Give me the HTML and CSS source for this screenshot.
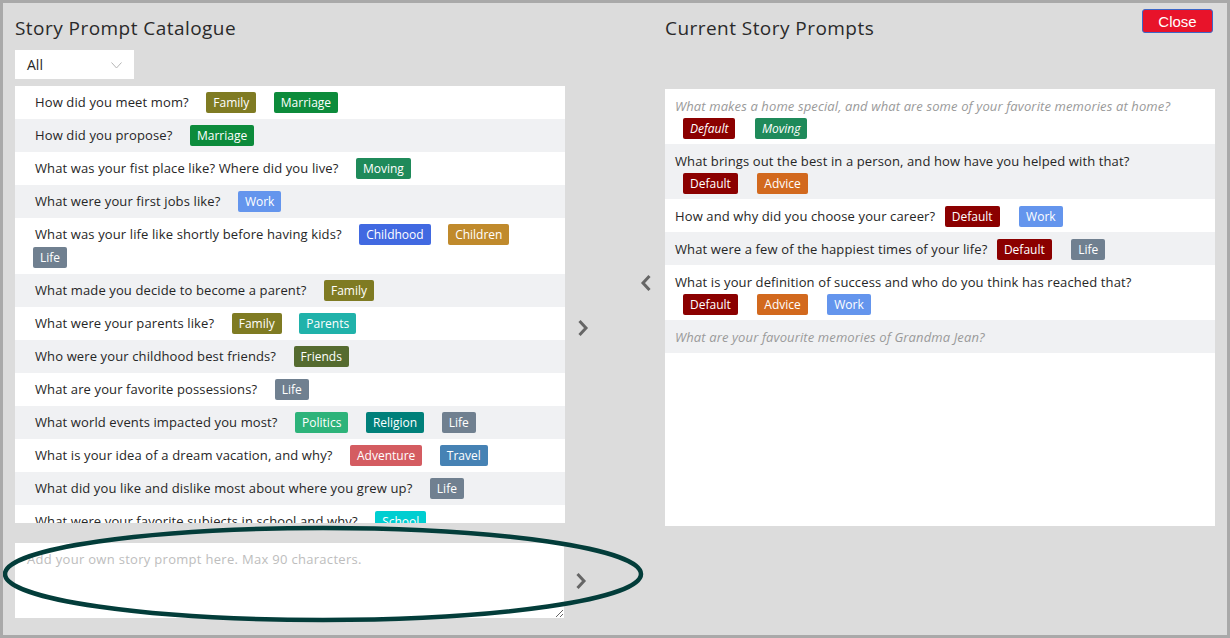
FILE: index.html
```html
<!DOCTYPE html>
<html>
<head>
<meta charset="utf-8">
<link rel="stylesheet" href="styles.css">
</head>
<body>
<div class="frame">
  <div class="top">
    <div class="col">
      <h1 class="title">Story Prompt Catalogue</h1>
      <div class="select"><span>All</span>
        <svg class="caret" width="11" height="7" viewBox="0 0 11 7"><path d="M0.5 0.5 L5.5 6 L10.5 0.5" fill="none" stroke="#b5b5b5" stroke-width="1"/></svg>
      </div>
      <div class="list catalogue">
        <div class="row">How did you meet mom? <span class="tag family">Family</span> <span class="tag marriage">Marriage</span></div>
        <div class="row">How did you propose? <span class="tag marriage">Marriage</span></div>
        <div class="row">What was your fist place like? Where did you live? <span class="tag moving">Moving</span></div>
        <div class="row">What were your first jobs like? <span class="tag work">Work</span></div>
        <div class="row">What was your life like shortly before having kids? <span class="tag childhood">Childhood</span> <span class="tag children">Children</span> <span class="tag life">Life</span></div>
        <div class="row">What made you decide to become a parent? <span class="tag family">Family</span></div>
        <div class="row">What were your parents like? <span class="tag family">Family</span> <span class="tag parents">Parents</span></div>
        <div class="row">Who were your childhood best friends? <span class="tag friends">Friends</span></div>
        <div class="row">What are your favorite possessions? <span class="tag life">Life</span></div>
        <div class="row">What world events impacted you most? <span class="tag politics">Politics</span> <span class="tag religion">Religion</span> <span class="tag life">Life</span></div>
        <div class="row">What is your idea of a dream vacation, and why? <span class="tag adventure">Adventure</span> <span class="tag travel">Travel</span></div>
        <div class="row">What did you like and dislike most about where you grew up? <span class="tag life">Life</span></div>
        <div class="row">What were your favorite subjects in school and why? <span class="tag school">School</span></div>
      </div>
    </div>
    <div class="mid">
      <svg class="arrow left" width="12" height="18" viewBox="0 0 12 18"><path d="M9.5 2 L3 9 L9.5 16" fill="none" stroke="#666" stroke-width="3"/></svg>
      <svg class="arrow right" width="12" height="18" viewBox="0 0 12 18"><path d="M2.5 2 L9 9 L2.5 16" fill="none" stroke="#666" stroke-width="3"/></svg>
    </div>
    <div class="col">
      <div class="head">
        <h1 class="title">Current Story Prompts</h1>
        <button class="close">Close</button>
      </div>
      <div class="list current">
        <div class="row custom">What makes a home special, and what are some of your favorite memories at home?<div class="tags"><span class="tag default">Default</span> <span class="tag moving2">Moving</span></div></div>
        <div class="row">What brings out the best in a person, and how have you helped with that?<div class="tags"><span class="tag default">Default</span> <span class="tag advice">Advice</span></div></div>
        <div class="row">How and why did you choose your career? <span class="tag default">Default</span> <span class="tag work">Work</span></div>
        <div class="row">What were a few of the happiest times of your life? <span class="tag default">Default</span> <span class="tag life">Life</span></div>
        <div class="row">What is your definition of success and who do you think has reached that?<div class="tags"><span class="tag default">Default</span> <span class="tag advice">Advice</span> <span class="tag work">Work</span></div></div>
        <div class="row custom">What are your favourite memories of Grandma Jean?</div>
      </div>
    </div>
  </div>
  <div class="bottom">
    <textarea class="own" placeholder="Add your own story prompt here. Max 90 characters."></textarea>
    <svg class="arrow" width="12" height="18" viewBox="0 0 12 18"><path d="M2.5 2 L9 9 L2.5 16" fill="none" stroke="#666" stroke-width="3"/></svg>
  </div>
  <svg class="mark" width="1230" height="638" viewBox="0 0 1230 638"><ellipse cx="323" cy="574" rx="318" ry="46" fill="none" stroke="#033d3a" stroke-width="4.5"/></svg>
</div>
</body>
</html>
```
FILE: styles.css
```css
* { box-sizing: border-box; }
html, body { margin: 0; padding: 0; }
body {
  font-family: "Open Sans", "Liberation Sans", sans-serif;
  color: #262626;
  background: #dcdcdc;
}
.frame {
  position: relative;
  width: 1230px;
  height: 638px;
  border: 3px solid #a9a9a9;
  background: #dcdcdc;
  padding: 10px 12px 0 12px;
  overflow: hidden;
}
.top {
  display: grid;
  grid-template-columns: 550px 100px 550px;
  align-items: start;
}
.col { display: flex; flex-direction: column; }
.title {
  margin: 0;
  height: 30px;
  line-height: 30px;
  font-size: 19px;
  font-weight: 400;
  color: #2a2a2a;
  letter-spacing: 0.45px;
}
.head { display: flex; justify-content: space-between; align-items: flex-start; }
.close {
  margin-top: -4px;
  margin-right: 2px;
  width: 71px;
  height: 24px;
  background: #e8132a;
  color: #fff;
  border: 1px solid #3c67c8;
  border-radius: 3px;
  font-family: "Liberation Sans", Arial, sans-serif;
  font-size: 15px;
  padding: 0;
}
.select {
  margin-top: 7px;
  width: 119px;
  height: 29px;
  background: #fff;
  display: flex;
  align-items: center;
  justify-content: space-between;
  padding: 0 12px;
  font-size: 14px;
}
.caret { margin-top: 1px; }
.list {
  background: #fff;
  height: 437px;
  overflow: hidden;
}
.catalogue { margin-top: 7px; }
.current { margin-top: 46px; }
.row {
  font-size: 13px;
  line-height: 23px;
  letter-spacing: 0.12px;
  padding: 5px 30px 5px 20px;
}
.row:nth-child(even) { background: #f0f1f3; }
.tag {
  display: inline-block;
  height: 21px;
  line-height: 21px;
  padding: 0 7px;
  border-radius: 2px;
  color: #fff;
  font-size: 12px;
  letter-spacing: 0;
  font-style: inherit;
  vertical-align: middle;
  margin: -2px 0 0 14px;
}
.catalogue .row .tag + .tag { margin-left: 14px; }
.catalogue .row:nth-child(5) .tag.life { margin-left: -2px; }
.current .row {
  line-height: 22px;
  padding: 5.5px 20px 5.5px 10px;
}
.current .tag { margin: -2px 8px 0 8px; }
.current .row > .tag:first-of-type { margin-left: 6px; }
.tags { line-height: 22px; }
.custom { color: #9a9a9a; font-style: italic; }
.family { background: #7f7b23; }
.marriage { background: #0c8b3b; }
.moving { background: #1f8a5a; }
.moving2 { background: #1f8a5a; }
.work { background: #6495ed; }
.childhood { background: #4169e1; }
.children { background: #c08a2c; }
.life { background: #708090; }
.parents { background: #20b2aa; }
.friends { background: #556b2f; }
.politics { background: #2db37a; }
.religion { background: #00807a; }
.adventure { background: #d45c61; }
.travel { background: #4682b4; }
.school { background: #00ced1; }
.default { background: #8b0000; }
.advice { background: #d2691e; }
.mid {
  position: relative;
  height: 500px;
  display: flex;
  flex-direction: column;
  padding-top: 261px;
}
.arrow.left { align-self: flex-end; margin-right: 13px; }
.arrow.right { margin-top: 27px; margin-left: 12px; }
.bottom {
  margin-top: 17px;
  display: flex;
  align-items: center;
}
.own {
  width: 549px;
  height: 75px;
  border: none;
  background: #fff;
  resize: vertical;
  font-family: "Open Sans", "Liberation Sans", sans-serif;
  font-size: 13px;
  letter-spacing: 0.3px;
  padding: 7px 12px;
  margin: 0;
  display: block;
}
.own::placeholder { color: #bdbdbd; }
.bottom .arrow { margin-left: 11px; }
.mark {
  position: absolute;
  left: -3px;
  top: -3px;
  pointer-events: none;
}
```
